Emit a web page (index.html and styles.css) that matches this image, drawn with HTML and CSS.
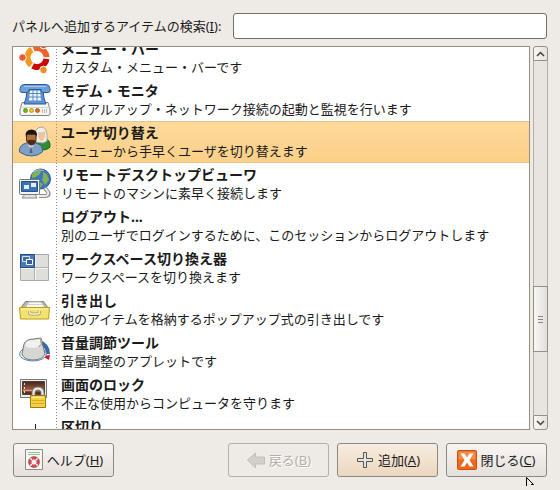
FILE: index.html
```html
<!DOCTYPE html>
<html lang="ja">

<head>
    <meta charset="UTF-8">
    <meta name="viewport" content="width=device-width, initial-scale=1.0">
    <title>パネルへ追加</title>
    <link rel="stylesheet" href="styles.css">
</head>

<body>
    <div class="dialog">
        <div class="search">
            <label for="search-input">パネルへ追加するアイテムの検索(<u>I</u>):</label>
            <input id="search-input" class="search-input" type="text">
        </div>

        <div class="pane">
            <div class="list-box">
                <ul class="list">
                    <li class="item">
                        <svg class="icon" viewBox="0 0 32 32">
                            <circle cx="18" cy="15.500" r="9.500" fill="none" stroke="#f0642a" stroke-width="6" stroke-dasharray="18 42" transform="rotate(-112 18 15.500)"/>
                            <circle cx="18" cy="15.500" r="9.500" fill="none" stroke="#c80a05" stroke-width="6" stroke-dasharray="18 42" transform="rotate(8 18 15.500)"/>
                            <circle cx="18" cy="15.500" r="9.500" fill="none" stroke="#f39a1d" stroke-width="6" stroke-dasharray="18 42" transform="rotate(128 18 15.500)"/>
                            <circle cx="3.500" cy="15.500" r="3.800" fill="#ee5b35" stroke="#fff"/>
                            <circle cx="24.500" cy="28" r="3.800" fill="#f08c2a" stroke="#fff"/>
                            <circle cx="24.500" cy="3" r="3.800" fill="#e2523a" stroke="#fff"/>
                        </svg>
                        <div class="text"><b>メニュー・バー</b><span>カスタム・メニュー・バーです</span></div>
                    </li>
                    <li class="item">
                        <svg class="icon" viewBox="0 0 32 32">
                            <path d="M3 18.500h26l2 7v4.500q0 1.500-2 1.500H3q-2 0-2-1.500v-4.500z" fill="#f5f5f2" stroke="#82827f"/>
                            <path d="M1.500 23.500h29" stroke="#d4d4d1"/>
                            <path d="M8 6h16l1 8 2 6H5l2-6z" fill="#5c90d0" stroke="#2d5a9b"/>
                            <path d="M5 .5h22q3.500 0 4 4v2q0 2-2 2h-5q-2 0-2-3H10q0 3-2 3H3q-2 0-2-2v-2q.5-4 4-4z" fill="#6f9fd8" stroke="#2d5a9b"/>
                            <path d="M5 2.500h22" stroke="#a7c6ec"/>
                            <path d="M11 6.500h10l1 10H10z" fill="#f0f5fc"/>
                            <path d="M10 9.500h12M10 13h12M14 6v11M18 6v11" stroke="#5a89c6"/>
                            <circle cx="6.500" cy="26.500" r="1.900" fill="#73bd25" stroke="#578a1b"/>
                            <circle cx="12.500" cy="26.500" r="1.900" fill="#edcf26" stroke="#b09420"/>
                            <circle cx="18.500" cy="26.500" r="1.900" fill="#ef6b2e" stroke="#b3501c"/>
                            <path d="M23.500 25v4M25.500 25v4M27.500 25v4" stroke="#bbb"/>
                        </svg>
                        <div class="text"><b>モデム・モニタ</b><span>ダイアルアップ・ネットワーク接続の起動と監視を行います</span></div>
                    </li>
                    <li class="item selected">
                        <svg class="icon" viewBox="0 0 32 32">
                            <path d="M14 21q-1-8 8-9 10 0 9 9-2 3-9 3z" fill="#2c8f34" stroke="#1b5e25"/>
                            <path d="M15 13q0-12 8-12 6 1 5 14l-4 2-7-1z" fill="#efeeea" stroke="#aaa79f"/>
                            <path d="M19 6q4 1 7-1v5q-1 5-4 5-3-1-3-9z" fill="#edc49c"/>
                            <path d="M.5 26q-1-7 7-9h9q8 2 7 9-5 4-11 4T.5 26z" fill="#7f9fc4" stroke="#41638c"/>
                            <path d="m8 17 4 6 4-6z" fill="#f4f5f5"/>
                            <path d="m12 19 1.500 8h-3z" fill="#41638c"/>
                            <path d="M7.500 8h9.500v6q-1 5-4.700 5T7.500 14z" fill="#b0723a" stroke="#4a2e18"/>
                            <path d="M7 11q-2-7 5.500-7.500 7 .5 5 7.500l-1-2.500H8z" fill="#1c1512"/>
                            <path d="M8 14.500q4.500-1.500 8.500 0-1 4.500-4.200 4.500T8 14.500z" fill="#4a2c18"/>
                        </svg>
                        <div class="text"><b>ユーザ切り替え</b><span>メニューから手早くユーザを切り替えます</span></div>
                    </li>
                    <li class="item">
                        <svg class="icon" viewBox="0 0 32 32">
                            <circle cx="21.500" cy="11" r="10" fill="#3f76b8" stroke="#2b5795"/>
                            <path d="M13 6q4-5 9-4l-1 4-4 3-4 1zM24 4l4 2 2 6-4 5-3-5 1-3zM19 13l5 3-3 4z" fill="#7fb05c"/>
                            <path d="M14 3.500q6-3 11-1" fill="none" stroke="#a5c4e8"/>
                            <path d="M20 28h6q5 0 3-4l-3-4" fill="none" stroke="#8c8d8a" stroke-width="4"/>
                            <path d="M20 28h6q4 0 3-4l-3-4" fill="none" stroke="#ededea" stroke-width="2"/>
                            <path d="M6 26h10l2 4H3z" fill="#e4e4e1" stroke="#888"/>
                            <rect x=".5" y="11.500" width="20" height="15" rx="1" fill="#f2f2ef" stroke="#777"/>
                            <path d="M2.500 13.500h16v10h-16z" fill="#3a74b8" stroke="#24508b"/>
                            <path d="M5 17h5v4H5zM12 15h5v4h-5z" fill="#e7eef8"/>
                        </svg>
                        <div class="text"><b>リモートデスクトップビューワ</b><span>リモートのマシンに素早く接続します</span></div>
                    </li>
                    <li class="item">
                        <span class="icon"></span>
                        <div class="text"><b>ログアウト...</b><span>別のユーザでログインするために、このセッションからログアウトします</span></div>
                    </li>
                    <li class="item">
                        <svg class="icon" viewBox="0 0 32 32">
                            <path d="M1.500 2.500h28v26h-28z" fill="#dededb" stroke="#aaa"/>
                            <path d="M1.500 2.500h14v13h-14z" fill="#4b79b5" stroke="#204a87"/>
                            <path d="M16.500 3v25M2 16.500h27" stroke="#f4f4f2"/>
                            <path d="M15.500 16v12M16 15.500h13" stroke="#b2b2af"/>
                            <path d="M3.500 4.500h7v5h-7z" fill="#416ca6" stroke="#d9e5f5"/>
                            <path d="M7.500 7.500h6v5h-6z" fill="#335f9b" stroke="#fff"/>
                        </svg>
                        <div class="text"><b>ワークスペース切り換え器</b><span>ワークスペースを切り換えます</span></div>
                    </li>
                    <li class="item">
                        <svg class="icon" viewBox="0 0 32 32">
                            <path d="m1.500 14.500 5-7h18l5 7z" fill="#b9b7ad" stroke="#85837a"/>
                            <path d="m6 14 4-6h12l4 6z" fill="#f8f7f4" stroke="#c8c6be"/>
                            <path d="M9 10.500h14" stroke="#d2d0c8"/>
                            <path d="M.5 13.500h30l-1 11.500h-28z" fill="#f4e36b" stroke="#b79f20"/>
                            <path d="M2 15h27" stroke="#fff7b5"/>
                            <path d="M10.500 17v1q0 2 2 2h6q2 0 2-2v-1" fill="none" stroke="#a39a5e" stroke-width="3"/>
                            <path d="M10.500 17v1q0 2 2 2h6q2 0 2-2v-1" fill="none" stroke="#f6f4e6" stroke-width="1.500"/>
                        </svg>
                        <div class="text"><b>引き出し</b><span>他のアイテムを格納するポップアップ式の引き出しです</span></div>
                    </li>
                    <li class="item">
                        <svg class="icon" viewBox="0 0 32 32">
                            <path d="M20 6q9 3 9 12" fill="none" stroke="#3468a6" stroke-width="4"/>
                            <path d="m23 20 8-1-1 5z" fill="#d91320"/>
                            <ellipse cx="14" cy="18" rx="13.500" ry="7" fill="#f4f4f2" stroke="#5c87bb"/>
                            <path d="M3 18 5 8q2-5 10-5l7-1 1 4 3 12q-3 6-12 6T3 18z" fill="#d6d7d4" stroke="#747572"/>
                            <path d="M6 9q1-5 9-5l7-1 1 5q-3 4-10 4-6 0-7-3z" fill="#f0f0ed"/>
                            <path d="m21.500 3.500 1 5-3 2" fill="none" stroke="#8a8b88"/>
                        </svg>
                        <div class="text"><b>音量調節ツール</b><span>音量調整のアプレットです</span></div>
                    </li>
                    <li class="item">
                        <svg class="icon" viewBox="0 0 32 32">
                            <defs>
                                <linearGradient id="dusk" x1="0" y1="0" x2="0" y2="1">
                                    <stop offset="0" stop-color="#3a2420"/>
                                    <stop offset=".6" stop-color="#a2583c"/>
                                    <stop offset=".7" stop-color="#d9a184"/>
                                    <stop offset=".8" stop-color="#5c2f22"/>
                                </linearGradient>
                            </defs>
                            <path d="M1.500 1.500h26v18h-26z" fill="#eeedea" stroke="#777"/>
                            <path d="M3.500 3.500h22v13h-22z" fill="url(#dusk)" stroke="#553e36"/>
                            <path d="M5.500 5v2M5.500 9v2M5.500 13v2" stroke="#ddd"/>
                            <path d="M14.500 18v-3q0-4.500 4.500-4.500t4.500 4.500v3" fill="none" stroke="#777" stroke-width="4"/>
                            <path d="M14.500 18v-3q0-4.500 4.500-4.500t4.500 4.500v3" fill="none" stroke="#eee" stroke-width="2"/>
                            <path d="M11.500 17.500h15v12h-15z" fill="#f2cf45" stroke="#a07b0b"/>
                            <path d="M13 19.500h12" stroke="#fff19a"/>
                            <path d="M13 22.500h12M13 25.500h12" stroke="#d8ab25"/>
                        </svg>
                        <div class="text"><b>画面のロック</b><span>不正な使用からコンピュータを守ります</span></div>
                    </li>
                    <li class="item">
                        <svg class="icon" viewBox="0 0 32 32">
                            <path d="M16.500 4v24" stroke="#222"/>
                        </svg>
                        <div class="text"><b>区切り</b></div>
                    </li>
                </ul>
            </div>
            <div class="scrollbar">
                <button class="step step-up" type="button" aria-label="上へ">
                    <svg viewBox="0 0 9 6"><path d="M1 5l3.500-3.500L8 5" fill="none" stroke="#44403c" stroke-width="1.500"/></svg>
                </button>
                <div class="track">
                    <div class="thumb"><i></i><i></i><i></i></div>
                </div>
                <button class="step step-down" type="button" aria-label="下へ">
                    <svg viewBox="0 0 9 6"><path d="M1 1l3.500 3.500L8 1" fill="none" stroke="#44403c" stroke-width="1.500"/></svg>
                </button>
            </div>
        </div>

        <div class="actions">
            <button class="btn btn-help" type="button">
                <svg viewBox="0 0 20 22">
                    <path d="M1.500.5h17v20h-17z" fill="#f5f5f2" stroke="#8b8c88"/>
                    <path d="M4 3.500h12M4 5.500h12" stroke="#9fbd9f"/>
                    <circle cx="10" cy="13" r="4" fill="none" stroke="#cf4a53" stroke-width="3"/>
                    <path d="m6 9 2 2M14 9l-2 2M6 17l2-2M14 17l-2-2" stroke="#fff" stroke-width="1.500"/>
                    <circle cx="10" cy="13" r="5.500" fill="none" stroke="#a84048" stroke-width=".6"/>
                </svg>
                <span>ヘルプ(<u>H</u>)</span>
            </button>
            <button class="btn" type="button" disabled>
                <svg viewBox="0 0 20 22">
                    <path d="m1.500 11 8-7v4h9v7h-9v4z" fill="#d2cfcb" stroke="#c2beb9"/>
                </svg>
                <span>戻る(<u>B</u>)</span>
            </button>
            <button class="btn btn-add" type="button">
                <svg viewBox="0 0 20 22">
                    <path d="M8.500 3.500h3v6h6v3h-6v6h-3v-6h-6v-3h6z" fill="#e4e5e1" stroke="#555753"/>
                </svg>
                <span>追加(<u>A</u>)</span>
            </button>
            <button class="btn btn-close" type="button">
                <svg viewBox="0 0 20 22">
                    <rect x=".5" y="1.500" width="19" height="19" rx="1" fill="#ef671d" stroke="#c9500f"/>
                    <path d="M1.500 2.500h17v8h-17z" fill="#f58a43"/>
                    <path d="M3.500 4.500h4l2.500 4 2.500-4h4L12.500 11l4 6.500h-4l-2.500-4-2.500 4h-4l4-6.500z" fill="#fff"/>
                </svg>
                <span>閉じる(<u>C</u>)</span>
            </button>
        </div>

        <!-- mouse pointer -->
        <svg class="pointer" viewBox="0 0 10 10">
            <path d="M.5 9V.5l7 7H5" fill="none" stroke="#000"/>
        </svg>
    </div>
</body>

</html>
```
FILE: styles.css
```css
* {
    box-sizing: border-box;
}

body {
    margin: 0;
    background-color: #eeebe7;
    color: #1a1a1a;
    font-family: "Noto Sans", "Noto Sans CJK JP", sans-serif;
    font-size: 13px;
    line-height: 18px;
}

.dialog {
    position: relative;
    display: flex;
    flex-direction: column;
    height: 100vh;
    padding: 13px 12px;
}

.search {
    display: flex;
    align-items: center;
    gap: 12px;
    padding-right: 1px;
    margin-bottom: 7px;
}

.search-input {
    flex: 1;
    min-width: 0;
    height: 26px;
    padding: 0 6px;
    border: 1px solid #756d66;
    border-radius: 3px;
    background-color: white;
    font: inherit;
    outline: none;
}

.pane {
    display: flex;
    flex: 1;
    gap: 3px;
    min-height: 0;
}

.list-box {
    flex: 1;
    min-width: 0;
    overflow: hidden;
    border: 1px solid #968c80;
    background-color: white;
}

/* scrolled a little past the top of the first row */
.list {
    margin: -10px 0 0;
    padding: 0;
    list-style: none;
}

.item {
    display: flex;
    align-items: center;
    height: 42px;
    padding-left: 6px;
    white-space: nowrap;
}

.selected {
    background: linear-gradient(#fdd99b, #fbd088);
    box-shadow: inset 0 1px #dfc58f, inset 0 -1px #eac37f;
}

.icon {
    flex: none;
    width: 32px;
    height: 32px;
}

.text {
    display: flex;
    flex-direction: column;
    height: 42px;
    margin-left: 5px;
    padding: 3px 0 3px 5px;
    /* dotted column line */
    background: repeating-linear-gradient(#8c8c8c 0 1px, transparent 1px 3px) left / 1px 100% no-repeat;
}

.text b {
    font-size: 14px;
}

.scrollbar {
    display: flex;
    flex-direction: column;
    width: 15px;
}

.step {
    display: flex;
    align-items: center;
    justify-content: center;
    height: 15px;
    padding: 0;
    border: 1px solid #968f88;
    background: linear-gradient(to right, #f8f7f5, #e6e1dc);
}

.step svg {
    width: 9px;
    height: 6px;
}

.step-up {
    border-radius: 3px 3px 0 0;
}

.step-down {
    border-radius: 0 0 3px 3px;
}

.track {
    display: flex;
    flex: 1;
    flex-direction: column;
    border: solid #b4aea8;
    border-width: 0 1px;
    background-color: #e8e4e0;
}

.track::before {
    content: "";
    flex: 226;
}

.track::after {
    content: "";
    flex: 63;
}

.thumb {
    display: flex;
    flex: 65;
    flex-direction: column;
    align-items: center;
    justify-content: center;
    gap: 2px;
    margin: 0 -1px;
    border: 1px solid #968f88;
    background: linear-gradient(to right, #f8f7f5, #e3deda);
}

.thumb i {
    width: 5px;
    height: 1px;
    background-color: #8b847e;
}

.actions {
    display: flex;
    gap: 8px;
    margin-top: 13px;
    padding: 0 1px;
}

.btn {
    display: flex;
    align-items: center;
    justify-content: center;
    gap: 3px;
    width: 101px;
    height: 34px;
    padding: 0;
    border: 1px solid #8f8882;
    border-radius: 3px;
    background: linear-gradient(#f7f5f3, #e6e0db);
    color: #1a1a1a;
    font: inherit;
    white-space: nowrap;
}

.btn svg {
    width: 20px;
    height: 22px;
}

.btn-help {
    margin-right: auto;
}

.btn-add {
    background: linear-gradient(#f8ece0, #ecd7bf);
}

.btn:disabled {
    border-color: #b5afa9;
    background: #eeebe7;
    color: #b4afa9;
    text-shadow: 1px 1px white;
}

.pointer {
    position: absolute;
    left: 526px;
    top: 477px;
    width: 10px;
    height: 10px;
}
```
